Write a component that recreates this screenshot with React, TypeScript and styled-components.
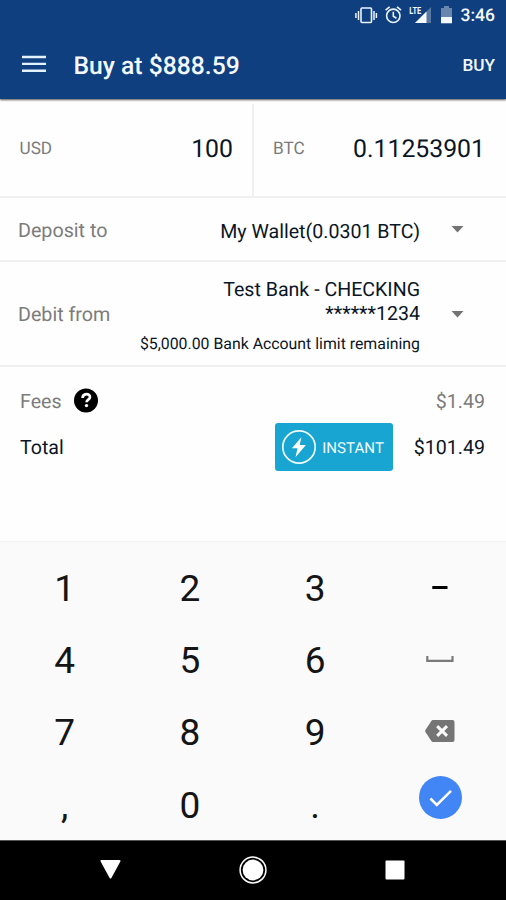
import React from 'react';
import styled, { createGlobalStyle } from 'styled-components';

const GlobalStyle = createGlobalStyle`
  * { box-sizing: border-box; }
  body { margin: 0; background: #fff; font-family: Roboto, sans-serif; color: #0a1625; text-rendering: geometricPrecision; }
  button { border: 0; padding: 0; background: none; font: inherit; color: inherit; }
  svg { display: block; flex: none; }
`;

const Screen = styled.div`
  width: 506px;
  height: 900px;
  display: flex;
  flex-direction: column;
  overflow: hidden;
  background: #fefefe;
`;

const Header = styled.header`
  flex: none;
  height: 99px;
  background: #103f80;
  color: #f3f9ff;
  box-shadow: 0 1px 2px rgba(30, 20, 20, 0.75);
`;

const StatusBar = styled.div`
  height: 31px;
  padding: 0 11px 0 354px;
  display: flex;
  align-items: center;
`;

const Clock = styled.span`
  margin-left: auto;
  padding-top: 1px;
  font-size: 17.5px;
  font-weight: 500;
  line-height: 32px;
`;

const Toolbar = styled.div`
  height: 68px;
  padding: 0 11px 0 22px;
  display: flex;
  align-items: center;
`;

const Title = styled.h1`
  margin: 0 auto 0 27.5px;
  padding-top: 3px;
  font-size: 24.7px;
  font-weight: 500;
  line-height: 68px;
`;

const BuyButton = styled.button`
  font-size: 17.2px;
  font-weight: 500;
`;

const Amounts = styled.section`
  flex: none;
  height: 99px;
  padding-top: 5px;
  display: grid;
  grid-template-columns: 252px 254px;
  border-bottom: 2px solid #f0f0f0;
`;

const Amount = styled.div<{ $divided?: boolean }>`
  display: flex;
  justify-content: space-between;
  align-items: center;
  padding: 0 ${p => (p.$divided ? 21 : 19)}px 2px ${p => (p.$divided ? 19 : 19.5)}px;
  border-left: ${p => (p.$divided ? '2px solid #f0f0f0' : '0')};
`;

const Currency = styled.span`
  font-size: 17.2px;
  color: #7c7c7c;
`;

const Value = styled.span`
  font-size: 24.8px;
`;

const AccountRow = styled.section<{ $height: number }>`
  flex: none;
  height: ${p => p.$height}px;
  padding: 0 42px 0 18px;
  display: flex;
  align-items: center;
  border-bottom: 2px solid #f0f0f0;
`;

const Label = styled.span`
  padding-top: 2px;
  font-size: 19.7px;
  color: #7c7c7c;
`;

const AccountText = styled.div`
  margin-left: auto;
  margin-right: 31px;
  padding-top: 5px;
  text-align: right;
  font-size: 19.6px;
  line-height: 24px;
`;

const Limit = styled.div`
  margin-top: 7px;
  font-size: 15.85px;
  line-height: 22px;
`;

const Summary = styled.section`
  flex: 1;
  padding: 11px 21px 0 20px;
  font-size: 19.6px;
`;

const SummaryRow = styled.div<{ $muted?: boolean }>`
  height: ${p => (p.$muted ? 44 : 49)}px;
  display: flex;
  align-items: center;
  color: ${p => (p.$muted ? '#7c7c7c' : 'inherit')};
`;

const SummaryText = styled.span`
  padding-top: 2px;
`;

const HelpIcon = styled.svg`
  margin-left: 12px;
`;

const Total = styled(SummaryText)`
  margin-left: auto;
`;

const InstantBadge = styled.div`
  margin-left: auto;
  margin-right: 20.5px;
  width: 118px;
  height: 48px;
  padding-left: 6px;
  display: flex;
  align-items: center;
  gap: 5px;
  border-radius: 3px;
  background: #18a5d1;
  color: #f4fcff;
  font-size: 15.1px;
`;

const Keypad = styled.section`
  flex: none;
  height: 298px;
  padding: 10px 3px 0 2px;
  overflow: hidden;
  display: grid;
  grid-template-columns: repeat(4, 1fr);
  grid-auto-rows: 72.4px;
  background: #fafafa;
  box-shadow: 0 -1px 1px #f3f3f3;
`;

const Key = styled.button<{ $lift?: number }>`
  display: flex;
  align-items: center;
  justify-content: center;
  font-size: 37px;
  line-height: 1;
  color: #151515;
  padding-bottom: ${p => p.$lift ?? 0}px;
`;

const NavBar = styled.nav`
  flex: none;
  height: 60px;
  padding: 0 101px 2px 100px;
  display: flex;
  align-items: center;
  justify-content: space-between;
  background: #000;
  border-top: 1px solid #555;
`;

const StatusIcons = () => (
  <svg width="102" height="31" viewBox="354 0 102 31" fill="none">
    <g stroke="#eaf4ff" strokeWidth="1.6">
      <rect x="361" y="8" width="10.5" height="14.5" rx="1" />
      <path d="M358.5 11v9M355.9 13v5M374 11v9M376.4 13v5" strokeWidth="1.5" />
      <circle cx="393.3" cy="15.8" r="6.7" />
      <path d="M393.3 11.7v4.5l3.2 2M385.6 10.2l4-3.4M401 10.2l-4-3.4" />
    </g>
    <path d="M431 7v16h-16z" fill="#58799f" />
    <path d="M426.5 11.5V23H415z" fill="#f3f9ff" />
    <rect x="408" y="6" width="14" height="8.5" fill="#103f80" />
    <text x="409.2" y="13.8" fill="#f3f9ff" fontFamily="Roboto" fontSize="10" fontWeight="700" textLength="12" lengthAdjust="spacingAndGlyphs">LTE</text>
    <path d="M441 8h3V6h5v2h3v9h-11z" fill="#6987ad" />
    <path d="M441 17h11v6.3h-11z" fill="#f3f9ff" />
  </svg>
);

const MenuIcon = () => (
  <svg width="24" height="20" viewBox="0 0 24 20" fill="#e3f2ff">
    <path d="M0 .8h24v2.4H0zM0 7.7h24v2.4H0zM0 14.6h24V17H0z" />
  </svg>
);

const Caret = () => (
  <svg width="13" height="8" viewBox="0 0 13 8" fill="#737373">
    <path d="M.5 1h12l-6 6.5z" />
  </svg>
);

const Bolt = () => (
  <svg width="36" height="36" viewBox="0 0 36 36">
    <circle cx="18" cy="18" r="16.2" fill="none" stroke="#effbff" strokeWidth="1.7" />
    <path d="M20.4 8.2 10.9 19.2h5.6l-2 9 10.4-12.3h-6.2z" fill="#fff" />
  </svg>
);

const Help = () => (
  <HelpIcon width="25" height="25" viewBox="0 0 25 25">
    <circle cx="12" cy="12.5" r="12" fill="#000" />
    <path d="M8.6 10c0-5.2 7.6-4.8 7.4-.9-.1 2.6-3.4 2.5-3.4 5.2" fill="none" stroke="#fff" strokeWidth="2.7" />
    <circle cx="12.5" cy="17.6" r="1.7" fill="#fff" />
  </HelpIcon>
);

const MinusIcon = () => (
  <svg width="16" height="3" viewBox="0 0 16 3"><path d="M.3 0h15.2v3H.3z" fill="#000" /></svg>
);

const SpaceIcon = () => (
  <svg width="28" height="7" viewBox="0 0 28 7">
    <path d="M1.3 0v4.9h25.2V0" fill="none" stroke="#7a7a7a" strokeWidth="2.2" />
  </svg>
);

const BackspaceIcon = () => (
  <svg width="30" height="22" viewBox="0 0 30 22">
    <path d="M8 0h19.5a2 2 0 0 1 2 2v18a2 2 0 0 1-2 2H8q-1 0-1.8-1.2L.6 12.2q-.7-1.2 0-2.4L6.2 1.2Q7 0 8 0z" fill="#757575" />
    <path d="m12.2 6.1 9.8 9.8m0-9.8-9.8 9.8" stroke="#fafafa" strokeWidth="2.9" />
  </svg>
);

const DoneIcon = () => (
  <svg width="43" height="43" viewBox="0 0 43 43">
    <circle cx="21.5" cy="21.5" r="21.5" fill="#4285f4" />
    <path d="m11.4 22.5 6.4 6.5L32 14.8" fill="none" stroke="#fff" strokeWidth="2.5" />
  </svg>
);

const NavIcons = {
  Back: () => (
    <svg width="21" height="19" viewBox="0 0 21 19">
      <path d="M1.5 1h18L10.5 17.5z" fill="#fff" stroke="#fff" strokeWidth="2" strokeLinejoin="round" />
    </svg>
  ),
  Home: () => (
    <svg width="28" height="28" viewBox="0 0 28 28">
      <circle cx="14" cy="14" r="12.9" fill="none" stroke="#fff" strokeWidth="1.5" />
      <circle cx="14" cy="14" r="10.4" fill="#fff" />
    </svg>
  ),
  Recent: () => (
    <svg width="20" height="20" viewBox="0 0 20 20"><rect x=".5" y=".5" width="19" height="19" rx="1" fill="#fff" /></svg>
  ),
};

const keys: { id: string; face: React.ReactNode; lift?: number }[] = [
  { id: '1', face: '1' },
  { id: '2', face: '2' },
  { id: '3', face: '3' },
  { id: 'minus', face: <MinusIcon />, lift: 1 },
  { id: '4', face: '4' },
  { id: '5', face: '5' },
  { id: '6', face: '6' },
  { id: 'space', face: <SpaceIcon />, lift: 3 },
  { id: '7', face: '7' },
  { id: '8', face: '8' },
  { id: '9', face: '9' },
  { id: 'backspace', face: <BackspaceIcon />, lift: 3 },
  { id: 'comma', face: ',' },
  { id: '0', face: '0' },
  { id: 'period', face: '.' },
  { id: 'done', face: <DoneIcon />, lift: 15 },
];

export default function App() {
  return (
    <>
      <GlobalStyle />
      <Screen>
        <Header>
          <StatusBar>
            <StatusIcons />
            <Clock>3:46</Clock>
          </StatusBar>
          <Toolbar>
            <MenuIcon />
            <Title>Buy at $888.59</Title>
            <BuyButton>BUY</BuyButton>
          </Toolbar>
        </Header>
        <Amounts>
          <Amount>
            <Currency>USD</Currency>
            <Value>100</Value>
          </Amount>
          <Amount $divided>
            <Currency>BTC</Currency>
            <Value>0.11253901</Value>
          </Amount>
        </Amounts>
        <AccountRow $height={64}>
          <Label>Deposit to</Label>
          <AccountText>My Wallet(0.0301 BTC)</AccountText>
          <Caret />
        </AccountRow>
        <AccountRow $height={105}>
          <Label>Debit from</Label>
          <AccountText>
            Test Bank - CHECKING
            <br />
            ******1234
            <Limit>$5,000.00 Bank Account limit remaining</Limit>
          </AccountText>
          <Caret />
        </AccountRow>
        <Summary>
          <SummaryRow $muted>
            <SummaryText>Fees</SummaryText>
            <Help />
            <Total>$1.49</Total>
          </SummaryRow>
          <SummaryRow>
            <SummaryText>Total</SummaryText>
            <InstantBadge>
              <Bolt />
              <SummaryText>INSTANT</SummaryText>
            </InstantBadge>
            <SummaryText>$101.49</SummaryText>
          </SummaryRow>
        </Summary>
        <Keypad>
          {keys.map(k => (
            <Key key={k.id} $lift={k.lift}>{k.face}</Key>
          ))}
        </Keypad>
        <NavBar>
          <NavIcons.Back />
          <NavIcons.Home />
          <NavIcons.Recent />
        </NavBar>
      </Screen>
    </>
  );
}
